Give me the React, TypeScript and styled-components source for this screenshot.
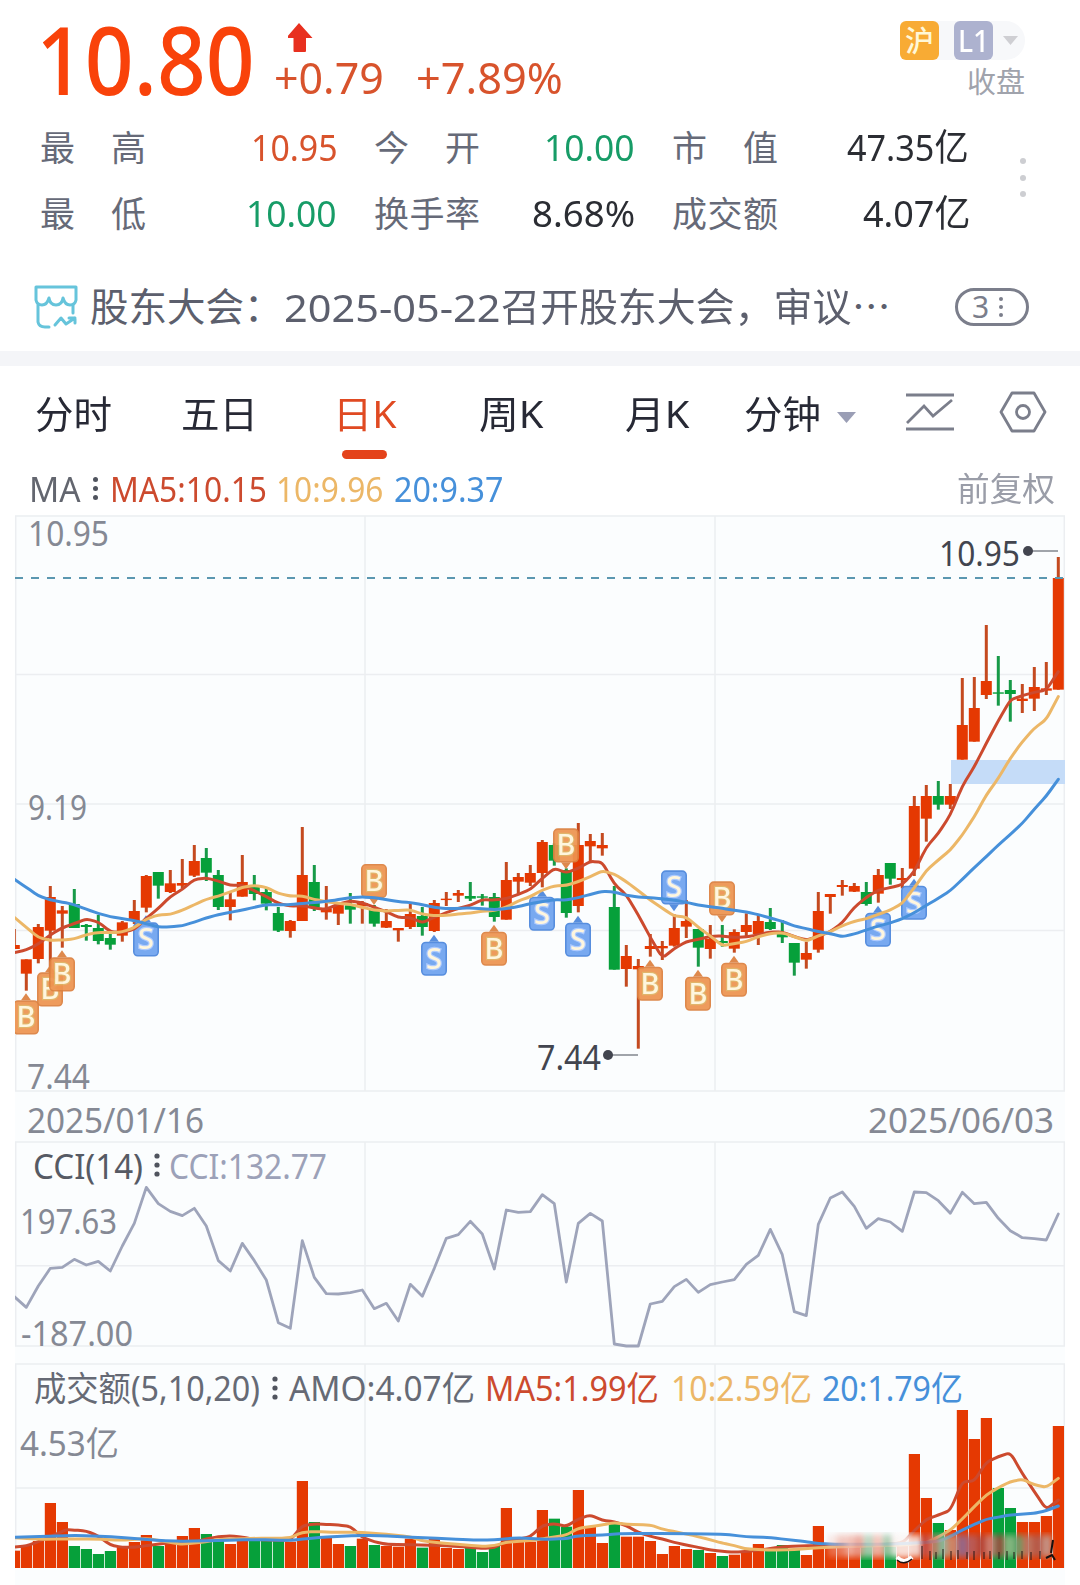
import React, { useLayoutEffect, useRef, useState } from "react";
import styled, { createGlobalStyle } from "styled-components";

const FONT = '"Noto Sans", "Noto Sans CJK SC", sans-serif';
const RED = "#e53902";
const GREEN = "#06a03a";
const LINE_RED = "#cc4a2e";
const LINE_GOLD = "#ecb767";
const LINE_BLUE = "#4690da";
const GRID = "#eceef1";

const Global = createGlobalStyle`
  * { box-sizing: border-box; }
  body { margin: 0; background: #fff; font-family: ${FONT}; }
`;

const Page = styled.main`
  width: 1080px;
  height: 1585px;
  display: flex;
  flex-direction: column;
  background: #fff;
`;

/* ---------- text fitted to a fixed measure ---------- */

const FitBox = styled.span<{ $w: number; $size: number; $color: string; $weight?: number }>`
  display: block;
  flex: none;
  width: ${(p) => p.$w}px;
  font-size: ${(p) => p.$size}px;
  font-weight: ${(p) => p.$weight ?? 400};
  line-height: 1;
  color: ${(p) => p.$color};
  white-space: nowrap;
`;
const FitInner = styled.span`
  display: inline-block;
  transform-origin: 0 50%;
`;

type FitProps = { w: number; size: number; color: string; weight?: number; children: React.ReactNode };

function Fit({ w, size, color, weight, children }: FitProps) {
  const ref = useRef<HTMLSpanElement>(null);
  const [scale, setScale] = useState(1);
  useLayoutEffect(() => {
    const el = ref.current;
    if (el && el.offsetWidth) setScale(w / el.offsetWidth);
  }, [w, size, children]);
  return (
    <FitBox $w={w} $size={size} $color={color} $weight={weight}>
      <FitInner ref={ref} style={{ transform: `scaleX(${scale})` }}>{children}</FitInner>
    </FitBox>
  );
}

/* ---------- quote header ---------- */

const Quote = styled.header`
  height: 114px;
  padding: 0 55px 0 36px;
  display: flex;
  align-items: flex-start;
`;
const PriceCell = styled.div`
  padding-top: 12px;
`;
const Change = styled.div`
  margin-left: 19px;
  padding-top: 22px;
  display: flex;
  flex-direction: column;
`;
const ArrowIcon = styled.svg`
  width: 28px;
  height: 31px;
  margin-left: 14px;
`;
const ChangeRow = styled.div`
  display: flex;
  gap: 32px;
  margin-top: 2px;
`;
const Market = styled.div`
  margin-left: auto;
  padding-top: 21px;
  display: flex;
  flex-direction: column;
  align-items: flex-end;
`;
const Badges = styled.div`
  display: flex;
  align-items: center;
  gap: 15px;
  width: 125px;
  height: 39px;
  border-radius: 8px 20px 20px 8px;
  background: #f7f8fa;
`;
const Badge = styled.span<{ $bg: string; $color: string; $weight?: number }>`
  display: flex;
  align-items: center;
  justify-content: center;
  width: 39px;
  height: 39px;
  border-radius: 6px;
  background: ${(p) => p.$bg};
  color: ${(p) => p.$color};
  font-size: 29px;
  font-weight: ${(p) => p.$weight ?? 400};
  line-height: 1;
`;
const Caret = styled.i<{ $w: number; $h: number; $color: string; $ml?: number; $mt?: number }>`
  flex: none;
  width: ${(p) => p.$w}px;
  height: ${(p) => p.$h}px;
  margin-left: ${(p) => p.$ml ?? 0}px;
  margin-top: ${(p) => p.$mt ?? 0}px;
  background: ${(p) => p.$color};
  clip-path: polygon(0 0, 100% 0, 50% 100%);
`;
const Closed = styled.div`
  margin-top: 7px;
`;

/* ---------- stat grid ---------- */

const Stats = styled.section`
  height: 144px;
  padding-left: 40px;
  display: flex;
`;
const StatGrid = styled.div`
  display: grid;
  grid-template-columns: 106px 190px 106px 154px 106px 190px;
  column-gap: 0;
  grid-template-rows: 66px 66px;
  align-items: center;
  width: 930px;
`;
const StatLabel = styled.div<{ $gap?: number }>`
  display: flex;
  justify-content: space-between;
  margin-left: ${(p) => p.$gap ?? 0}px;
  margin-right: -${(p) => p.$gap ?? 0}px;
  font-size: 35px;
  line-height: 1;
  color: #666a78;
`;
const StatValue = styled.div<{ $right: number }>`
  display: flex;
  justify-content: flex-end;
  margin-right: ${(p) => p.$right}px;
  margin-top: -2px;
`;
const Dots = styled.span<{ $size: number; $gap: number; $color: string; $ml?: number; $mt?: number }>`
  display: flex;
  flex: none;
  flex-direction: column;
  gap: ${(p) => p.$gap}px;
  margin-left: ${(p) => p.$ml ?? 0}px;
  margin-top: ${(p) => p.$mt ?? 0}px;
  i {
    width: ${(p) => p.$size}px;
    height: ${(p) => p.$size}px;
    border-radius: 50%;
    background: ${(p) => p.$color};
  }
`;

/* ---------- notice ---------- */

const Notice = styled.section`
  height: 93px;
  padding: 4px 51px 0 34px;
  display: flex;
  align-items: center;
`;
const NoticeIcon = styled.svg`
  width: 44px;
  height: 44px;
  margin-right: 12px;
`;
const CountPill = styled.div`
  margin-left: auto;
  width: 74px;
  height: 38px;
  border: 3px solid #7b7e8b;
  border-radius: 19px;
  display: flex;
  align-items: center;
  padding-left: 14px;
`;
const Divider = styled.div`
  height: 15px;
  background: #f4f5f8;
`;

/* ---------- tabs ---------- */

const Tabs = styled.nav`
  height: 104px;
  padding-left: 34px;
  display: flex;
  align-items: flex-start;
`;
const Tab = styled.div<{ $ml: number }>`
  margin-left: ${(p) => p.$ml}px;
  padding-top: 28px;
  height: 93px;
  display: flex;
  flex-direction: column;
  justify-content: space-between;
  align-items: center;
`;
const Underline = styled.i`
  width: 45px;
  height: 9px;
  margin-right: 2px;
  border-radius: 5px;
  background: #e4431b;
`;
const ToolIcon = styled.svg<{ $ml: number }>`
  flex: none;
  width: 50px;
  height: 44px;
  margin-left: ${(p) => p.$ml}px;
  margin-top: 24px;
`;

/* ---------- indicator legend ---------- */

const Legend = styled.div`
  height: 45px;
  padding: 2px 25px 0 29px;
  display: flex;
  align-items: flex-start;
`;
const Spacer = styled.i<{ $w?: number }>`
  ${(p) => (p.$w ? `width: ${p.$w}px;` : "flex: 1;")}
`;

const Charts = styled.section`
  margin-left: 15px;
  width: 1050px;
  flex: 1;
  display: flex;
  flex-direction: column;
  background: #fbfdfe;
`;
const Chart = styled.svg<{ $h: number }>`
  display: block;
  flex: none;
  width: 1050px;
  height: ${(p) => p.$h}px;
  overflow: visible;
  font-family: ${FONT};
`;

/* ---------- chart data ---------- */

type Candle = [up: 0 | 1, high: number, top: number, bottom: number, low: number];

const candles: Candle[] = [
  [1,387,435,447,447],[1,478,478,521,572],[1,372,381,477,490],[1,258,291,392,520],[1,318,331,341,443],
  [0,267,312,384,384],[0,372,375,381,422],[0,345,384,423,433],[0,402,414,434,449],[1,363,367,407,425],
  [1,300,333,363,372],[1,225,228,323,337],[0,216,216,257,296],[1,210,250,276,279],[1,177,249,257,264],
  [1,135,183,227,231],[0,144,174,218,243],[0,210,225,321,330],[1,275,298,321,361],[1,165,246,290,290],
  [0,225,258,282,301],[0,264,276,311,331],[0,321,339,392,396],[1,360,363,393,413],[1,81,225,363,363],
  [0,195,246,323,333],[1,258,325,337,359],[1,312,315,341,375],[0,279,316,329,371],[1,303,309,319,371],
  [0,315,330,371,380],[1,327,363,383,384],[1,384,384,391,425],[1,312,342,381,387],[0,321,348,381,407],
  [1,300,309,393,396],[1,276,296,299,318],[1,270,279,287,306],[0,246,288,296,303],[0,282,289,292,317],
  [0,279,291,351,365],[1,186,240,359,359],[1,219,231,245,285],[1,195,219,248,258],[1,120,126,219,262],
  [0,130,135,182,197],[0,205,210,339,353],[1,69,135,318,337],[1,102,123,139,185],[1,99,135,145,167],
  [0,258,321,509,509],[1,435,468,507,560],[1,477,498,508,746],[1,402,438,447,470],[1,423,438,445,480],
  [1,343,384,437,440],[1,300,363,380,414],[0,387,387,443,500],[1,375,417,447,476],[0,375,423,429,440],
  [1,388,396,446,458],[1,340,375,396,410],[1,342,363,402,435],[0,324,366,387,390],[0,360,400,412,429],
  [0,429,429,488,527],[1,425,459,479,506],[1,276,333,449,458],[1,282,282,291,341],[1,240,255,261,287],
  [1,249,258,275,276],[0,246,276,312,317],[1,207,225,281,308],[0,189,189,236,254],[1,204,234,240,265],
  [1,-12,18,206,228],[1,-45,-12,56,125],[0,-57,-12,14,29],[1,-48,-12,14,27],[1,-366,-225,-121,-121],
  [1,-369,-276,-175,-175],[1,-525,-357,-315,-303],[0,-432,-323,-319,-283],[0,-360,-330,-318,-235],
  [1,-348,-304,-297,-261],[1,-399,-339,-304,-267],[1,-414,-335,-328,-315],[1,-729,-666,-331,-331],
];

const ma5 = [458,450,432,405,383,371,357,366,395,398,388,355,325,290,268,238,234,243,256,256,272,290,310,318,317,324,328,312,303,308,322,335,352,353,368,352,338,325,316,299,300,296,283,268,235,205,218,205,184,187,252,285,345,412,474,446,425,418,409,408,412,411,404,396,396,410,420,409,395,368,322,292,270,263,254,215,142,100,45,-42,-100,-170,-238,-300,-313,-323,-330,-385];
const ma10 = [352,382,412,421,420,417,404,397,398,396,383,357,345,343,331,314,298,288,276,262,256,262,280,288,288,298,305,310,313,322,330,333,331,330,342,347,346,342,339,334,331,322,303,290,270,258,256,245,230,213,222,245,272,300,325,348,351,382,408,437,431,425,410,401,398,410,423,408,395,377,364,356,343,330,310,263,212,180,150,105,50,-15,-65,-125,-175,-215,-242,-310];
const ma20 = [238,262,287,300,306,314,328,340,350,356,362,371,381,381,377,366,354,344,337,330,322,314,314,314,310,308,304,299,293,291,293,299,305,308,314,322,326,325,324,326,329,326,320,311,305,299,300,293,283,274,276,286,291,293,297,300,307,315,320,325,331,336,344,354,364,378,386,395,401,410,402,390,378,369,356,338,316,295,272,238,203,170,135,103,70,28,-12,-62];

type Signal = { i: number; kind: "B" | "S"; top: number; below?: boolean };
const signals: Signal[] = [
  { i: 1, kind: "B", top: 601 }, { i: 3, kind: "B", top: 517 }, { i: 4, kind: "B", top: 472 },
  { i: 11, kind: "S", top: 367 }, { i: 30, kind: "B", top: 192, below: true }, { i: 35, kind: "S", top: 425 },
  { i: 40, kind: "B", top: 395 }, { i: 44, kind: "S", top: 290 }, { i: 46, kind: "B", top: 85, below: true },
  { i: 47, kind: "S", top: 368 }, { i: 53, kind: "B", top: 500 }, { i: 55, kind: "S", top: 211, below: true },
  { i: 57, kind: "B", top: 530 }, { i: 59, kind: "B", top: 244, below: true }, { i: 60, kind: "B", top: 488 },
  { i: 72, kind: "S", top: 338 }, { i: 75, kind: "S", top: 257 },
];

const cci = [620,652,588,535,532,508,525,514,543,468,400,292,341,364,377,355,408,512,543,460,512,570,698,715,452,562,611,612,608,600,656,640,693,583,619,535,445,434,394,432,537,360,367,365,314,341,576,400,370,393,762,768,768,642,634,590,568,607,584,576,569,523,496,418,494,665,677,403,324,306,349,415,386,396,424,306,308,332,370,307,341,337,385,422,443,446,450,372];

const volumes = [587,570,558,444,501,573,582,597,588,573,561,540,573,567,543,519,537,555,567,555,555,555,555,560,378,501,549,567,573,551,570,573,575,551,578,551,579,582,578,591,573,459,558,560,465,491,515,405,515,564,503,545,545,558,597,573,582,585,594,603,599,591,567,579,570,582,600,513,570,565,565,575,570,575,570,297,429,504,525,165,252,189,399,459,501,501,483,213];
const volumeDown = new Set([5,6,7,8,12,16,17,20,21,22,25,28,30,34,38,39,40,45,46,50,57,59,63,64,65,71,73,77,82,83]);

const vMa5: [number, number][] = [[0,576],[1,573],[2,560],[3,545],[4.3,524],[5,525],[6,528],[7,543],[8,570],[9,577],[10,577],[11,572],[13,563],[15,562],[16,552],[17,545],[18,543],[19,546],[20,553],[22,556],[23,555],[24,512],[25,507],[26,508],[27,510],[28,514],[29,547],[30,560],[31,568],[34,570],[36,572],[38,577],[39,580],[40,578],[41,558],[42,553],[43,545],[44,512],[45,506],[46,514],[47,492],[48,480],[49,496],[50,500],[51,512],[52,532],[53,544],[54,552],[55,562],[56,570],[57,577],[58,585],[60,592],[62,586],[64,575],[67,571],[71,572],[74,565],[75,527],[76,493],[77,480],[78,466],[79,380],[80,378],[81,322],[82,305],[83,293],[84,355],[85,410],[86,463],[87,435]];
const vMa10: [number, number][] = [[0,548],[2,553],[4,552],[7,552],[9,556],[11,550],[12,556],[13,562],[14,568],[16,560],[17,553],[20,550],[22,550],[23,548],[24,532],[25,530],[27,532],[29,532],[31,538],[33,545],[34,558],[36,565],[39,574],[40,572],[41,562],[43,556],[44,552],[46,540],[47,520],[49,510],[50,503],[51,508],[53,510],[54,522],[57,545],[59,564],[60,572],[61,582],[63,585],[65,584],[67,578],[70,574],[74,570],[76,565],[78,526],[79,492],[80,455],[81,420],[82,398],[83,380],[84,373],[85,389],[86,397],[87,370]];
const vMa20: [number, number][] = [[0,547],[5,541],[8,545],[12,556],[14,559],[17,556],[20,554],[23,556],[24,552],[26,546],[29,541],[31,543],[34,548],[38,555],[40,555],[42,548],[44,553],[46,551],[47,542],[49,540],[51,535],[55,536],[59,537],[61,545],[63,548],[66,560],[67,566],[69,568],[73,568],[77,560],[78,545],[79,525],[80,508],[81,493],[82,486],[83,480],[85,475],[86,467],[87,453]];

const xAt = (i: number) => 14.3 + i * 12;
const priceY = (v: number) => 800 + v / 3;
const cciY = (v: number) => 1090 + v / 3;
const volY = (v: number) => 1355 + v / 3;

/* rounds each joint a little so the averages read as smooth curves */
function smooth(points: [number, number][]) {
  let d = `M${points[0][0]} ${points[0][1]}`;
  for (let i = 1; i < points.length - 1; i++) {
    const [x, y] = points[i];
    const [px, py] = points[i - 1];
    const [nx, ny] = points[i + 1];
    d += ` L${x + (px - x) * 0.3} ${y + (py - y) * 0.3} Q${x} ${y} ${x + (nx - x) * 0.3} ${y + (ny - y) * 0.3}`;
  }
  const last = points[points.length - 1];
  return `${d} L${last[0]} ${last[1]}`;
}

const Curve = ({ points, color, width = 3 }: { points: [number, number][]; color: string; width?: number }) => (
  <path d={smooth(points)} fill="none" stroke={color} strokeWidth={width} strokeLinecap="round" strokeLinejoin="round" />
);

type LabelProps = { x: number; y: number; w: number; color: string; size?: number; children: string };
const Label = ({ x, y, w, color, size = 34, children }: LabelProps) => (
  <text x={x} y={y} fontSize={size} fill={color} textLength={w} lengthAdjust="spacingAndGlyphs">{children}</text>
);

const VDots = ({ x, y, color = "#50545e" }: { x: number; y: number; color?: string }) => (
  <g fill={color}>
    {[-9, 0, 9].map((d) => <circle key={d} cx={x} cy={y + d} r={2.6} />)}
  </g>
);

function SignalMark({ i, kind, top, below }: Signal) {
  const x = xAt(i) - 0.3;
  const y = priceY(top);
  const isBuy = kind === "B";
  const fill = isBuy ? "#ee9450" : "#6fa3f0";
  const edge = isBuy ? "#dc8140" : "#4b86dc";
  const tip = below ? `M${x - 5} ${y + 34}L${x} ${y + 41}L${x + 5} ${y + 34}Z` : `M${x - 5} ${y}L${x} ${y - 7}L${x + 5} ${y}Z`;
  return (
    <g opacity={0.93}>
      <path d={tip} fill={edge} />
      <rect x={x - 12.2} y={y + 0.8} width={24.4} height={32.6} rx={4} fill={fill} stroke={edge} strokeWidth={1.6} />
      <text x={x} y={y + 27} fontSize={29} fontWeight={500} textAnchor="middle" fill="#fff6dc"
        stroke={isBuy ? "#e0b060" : "#a9c8ff"} strokeWidth={2.4} paintOrder="stroke">{kind}</text>
    </g>
  );
}

function PriceChart() {
  return (
    <Chart $h={627} viewBox="15 515 1050 627">
      <defs>
        <clipPath id="pricePlot"><rect x={15} y={515} width={1050} height={627} /></clipPath>
      </defs>
      <g stroke={GRID} strokeWidth={1.5} fill="none">
        <path d="M15 516H1064.3V1091H15.7V516M365 516V1091M715 516V1091M15 674.5H1065M15 804H1065M15 930.5H1065" />
      </g>
      <rect x={951} y={760} width={114} height={24} fill="#c5dcf8" />
      <Label x={28} y={546} w={81} color="#858994">10.95</Label>
      <Label x={28} y={820} w={59} color="#858994">9.19</Label>
      <Label x={27} y={1089} w={63} color="#858994">7.44</Label>
      <g clipPath="url(#pricePlot)">
        {candles.map(([up, high, top, bottom, low], i) => (
          <g key={i} fill={up ? RED : GREEN}>
            <rect x={xAt(i) - 1.5} y={priceY(high)} width={3} height={(low - high) / 3} fill={up ? "#c44a20" : "#179a48"} />
            <rect x={xAt(i) - 5.5} y={priceY(top)} width={11} height={Math.max(1.4, (bottom - top) / 3)} />
          </g>
        ))}
        <path d="M15 578H1065" stroke="#5b97b0" strokeWidth={2} strokeDasharray="8 8" />
        {signals.map((s) => <SignalMark key={s.i} {...s} />)}
        <Curve points={ma5.map((v, i) => [xAt(i), priceY(v)])} color={LINE_RED} />
        <Curve points={ma10.map((v, i) => [xAt(i), priceY(v)])} color={LINE_GOLD} />
        <Curve points={ma20.map((v, i) => [xAt(i), priceY(v)])} color={LINE_BLUE} />
      </g>
      <g stroke="#83868f" strokeWidth={1.6}>
        <path d="M1028 551H1058M608 1055H638" />
        <circle cx={1028} cy={551} r={5} fill="#42454f" stroke="none" />
        <circle cx={608} cy={1055} r={5} fill="#42454f" stroke="none" />
      </g>
      <Label x={939} y={566} w={81} color="#42454f">10.95</Label>
      <Label x={537} y={1070} w={64} color="#42454f">7.44</Label>
      <Label x={27} y={1133} w={177} color="#858994">2025/01/16</Label>
      <Label x={868} y={1133} w={186} color="#858994">2025/06/03</Label>
    </Chart>
  );
}

function CciChart() {
  return (
    <Chart $h={222} viewBox="15 1142 1050 222">
      <defs>
        <clipPath id="cciPlot"><rect x={15} y={1142} width={1050} height={222} /></clipPath>
      </defs>
      <path d="M15 1142H1064.3V1346H15.7V1142M365 1142V1346M715 1142V1346M15 1265.7H1065" stroke={GRID} strokeWidth={1.5} fill="none" />
      <Label x={33} y={1179} w={110} color="#565a64">CCI(14)</Label>
      <VDots x={157} y={1165} />
      <Label x={169} y={1179} w={158} color="#9ca1b8">CCI:132.77</Label>
      <Label x={20} y={1234} w={97} color="#858994">197.63</Label>
      <Label x={21} y={1345.5} w={112} color="#858994">-187.00</Label>
      <polyline points={cci.map((v, i) => `${xAt(i)},${cciY(v)}`).join(" ")} clipPath="url(#cciPlot)" fill="none" stroke="#9ea4ba" strokeWidth={2.8} strokeLinejoin="round" strokeLinecap="round" />
    </Chart>
  );
}

const smearTones = ["#f3c5bb", "#eca99b", "#f0b8ac", "#e9a294", "#b5cfb9", "#f1bfb4", "#a9c9ad", "#f7efec", "#e2978c", "#f6ebe8", "#c2504a", "#cf7a6c", "#9fb59f", "#c98f74", "#8e6c94", "#b45f60", "#b04a40", "#c88278", "#a24d42", "#93b887", "#6ba06f", "#b77a6a", "#b05f52", "#c09a90"];

function Smear() {
  return (
    <g>
      <defs>
        <filter id="soft" x="-5%" y="-30%" width="110%" height="160%"><feGaussianBlur stdDeviation="2 3.4" /></filter>
        <linearGradient id="fadeIn" x1="0" x2="1"><stop offset="0" stopColor="#fff" stopOpacity="0.1" /><stop offset="0.12" stopColor="#fff" /></linearGradient>
        <mask id="smearMask"><rect x={822} y={1520} width={240} height={50} fill="url(#fadeIn)" /></mask>
      </defs>
      <g mask="url(#smearMask)">
        <g filter="url(#soft)" opacity={0.88}>
          {smearTones.map((c, i) => <rect key={i} x={826 + i * 9.4} y={1535} width={9.4} height={22} fill={c} />)}
          <rect x={897} y={1534} width={14} height={24} fill="#fbf6f4" />
        </g>
      </g>
      <path d="M897 1557Q904 1565 912 1557" stroke="#fff" strokeWidth={4} fill="none" />
      <path d="M897 1560Q904 1566 912 1559" stroke="#1c1110" strokeWidth={1.4} fill="none" />
      <path d="M922 1546V1559M930 1551V1560M936 1552V1559M943 1549V1559M951 1551V1560M958 1550V1559M967 1552V1559M974 1551V1560M984 1552V1559M990 1551V1559M999 1552V1559M1007 1551V1560M1014 1552V1559M1022 1551V1559M1031 1552V1560M1040 1551V1559" stroke="#221413" strokeWidth={1.5} opacity={0.65} />
      <path d="M1053 1540L1051 1553M1046 1558L1052 1555L1055 1560" stroke="#17100f" strokeWidth={2} fill="none" />
    </g>
  );
}

function VolumeChart() {
  const toPoints = (list: [number, number][]) => list.map(([i, v]) => [xAt(i), volY(v)] as [number, number]);
  return (
    <Chart $h={221} viewBox="15 1364 1050 221">
      <defs>
        <clipPath id="volPlot"><rect x={15} y={1364} width={1050} height={221} /></clipPath>
      </defs>
      <path d="M15 1364H1064.3V1568M15.7 1568V1364M365 1364V1568M715 1364V1568M15 1488H1065" stroke={GRID} strokeWidth={1.5} fill="none" />
      <g clipPath="url(#volPlot)">
        {volumes.map((v, i) => (
          <rect key={i} x={xAt(i) - 5.5} y={volY(v)} width={11.2} height={1568 - volY(v)} fill={volumeDown.has(i) ? GREEN : RED} />
        ))}
        <Curve points={toPoints(vMa5)} color={LINE_RED} />
        <Curve points={toPoints(vMa10)} color={LINE_GOLD} />
        <Curve points={toPoints(vMa20)} color={LINE_BLUE} />
        <Smear />
      </g>
      <Label x={34} y={1401} w={226} color="#666a75">成交额(5,10,20)</Label>
      <VDots x={275} y={1388} />
      <Label x={289} y={1401} w={186} color="#666a75">AMO:4.07亿</Label>
      <Label x={485} y={1401} w={174} color={LINE_RED}>MA5:1.99亿</Label>
      <Label x={671} y={1401} w={141} color={LINE_GOLD}>10:2.59亿</Label>
      <Label x={822} y={1401} w={141} color={LINE_BLUE}>20:1.79亿</Label>
      <Label x={20} y={1456} w={99} color="#858994">4.53亿</Label>
    </Chart>
  );
}

const Chars = ({ text, gap }: { text: string; gap?: number }) => (
  <StatLabel $gap={gap}>{[...text].map((c) => <span key={c}>{c}</span>)}</StatLabel>
);

const INK = "#2b2d33";
const UP = "#d8532c";
const DOWN = "#179c67";

export default function App() {
  return (
    <Page>
      <Global />
      <Quote>
        <PriceCell><Fit w={219} size={94} color="#f9420a" weight={500}>10.80</Fit></PriceCell>
        <Change>
          <ArrowIcon viewBox="0 0 28 31">
            <path d="M11 1L24.500 16H18V29Q18 30 17 30H6.500Q5.500 30 5.500 29V16H-2Z" fill="#e8301f" />
          </ArrowIcon>
          <ChangeRow>
            <Fit w={110} size={44.5} color={UP}>+0.79</Fit>
            <Fit w={147} size={44.5} color={UP}>+7.89%</Fit>
          </ChangeRow>
        </Change>
        <Market>
          <Badges>
            <Badge $bg="#f8ab34" $color="#fff8d8" $weight={500}>沪</Badge>
            <Badge $bg="#adb2cf" $color="#fff"><Fit w={31} size={31} color="#fff" weight={500}>L1</Fit></Badge>
            <Caret $w={15} $h={9} $color="#cfcfd3" $ml={-5} />
          </Badges>
          <Closed><Fit w={58} size={29} color="#a0a3ac">收盘</Fit></Closed>
        </Market>
      </Quote>

      <Stats>
        <StatGrid>
          <Chars text="最高" />
          <StatValue $right={-2}><Fit w={87} size={37} color={UP}>10.95</Fit></StatValue>
          <Chars text="今开" gap={38} />
          <StatValue $right={-39}><Fit w={91} size={37} color={DOWN}>10.00</Fit></StatValue>
          <Chars text="市值" gap={76} />
          <StatValue $right={-77}><Fit w={122} size={37} color={INK}>47.35亿</Fit></StatValue>
          <Chars text="最低" />
          <StatValue $right={-1}><Fit w={91} size={37} color={DOWN}>10.00</Fit></StatValue>
          <Chars text="换手率" gap={38} />
          <StatValue $right={-39}><Fit w={103} size={37} color={INK}>8.68%</Fit></StatValue>
          <Chars text="成交额" gap={76} />
          <StatValue $right={-78}><Fit w={107} size={37} color={INK}>4.07亿</Fit></StatValue>
        </StatGrid>
        <Dots $size={6} $gap={10.5} $color="#cdced2" $ml={50} $mt={44}><i /><i /><i /></Dots>
      </Stats>

      <Notice>
        <NoticeIcon viewBox="0 0 44 44" fill="none" stroke="#66c4db" strokeWidth="3" strokeLinecap="round" strokeLinejoin="round">
          <path d="M2 2H42V15Q41 20 36 20Q31 20 29 13Q28 20 22 20Q16 20 15 13Q13 20 8 20Q3 20 2 15Z" />
          <path d="M4 20V37Q5 42 11 42H15M39 20V28M21 40L27 33L32 39L41 33M35 33H41V38" />
        </NoticeIcon>
        <Fit w={193} size={38.5} color="#5c5f6d">股东大会：</Fit>
        <Spacer $w={1} />
        <Fit w={217} size={39} color="#5c5f6d">2025-05-22</Fit>
        <Fit w={351} size={38.5} color="#5c5f6d">召开股东大会，审议</Fit>
        <Fit w={39} size={38.5} color="#5c5f6d">⋯</Fit>
        <CountPill>
          <Fit w={17} size={30} color="#7b7e8b">3</Fit>
          <Dots $size={4} $gap={4} $color="#7b7e8b" $ml={10}><i /><i /><i /></Dots>
        </CountPill>
      </Notice>
      <Divider />

      <Tabs>
        <Tab $ml={1}><Fit w={77} size={38} color="#272935">分时</Fit></Tab>
        <Tab $ml={69}><Fit w={77} size={38} color="#272935">五日</Fit></Tab>
        <Tab $ml={75}><Fit w={64} size={38} color="#e04a22">日K</Fit><Underline /></Tab>
        <Tab $ml={82}><Fit w={65} size={38} color="#272935">周K</Fit></Tab>
        <Tab $ml={81}><Fit w={65} size={38} color="#272935">月K</Fit></Tab>
        <Tab $ml={54}><Fit w={77} size={38} color="#272935">分钟</Fit></Tab>
        <Caret $w={19} $h={11} $color="#9a9eb5" $ml={16} $mt={46} />
        <ToolIcon $ml={49} viewBox="0 0 50 44" fill="none" stroke="#7b7e8b" strokeWidth="2.8">
          <path d="M1 5H49M1 39H49M2 33L19 16L28 26L47 10" />
        </ToolIcon>
        <ToolIcon $ml={43} viewBox="0 0 50 44" fill="none" stroke="#7b7e8b" strokeWidth="2.8" strokeLinejoin="round">
          <path d="M14 3H36L47 22L36 41H14L3 22Z" /><circle cx="25" cy="22" r="6.5" />
        </ToolIcon>
      </Tabs>

      <Legend>
        <Fit w={52} size={34} color="#63666f">MA</Fit>
        <Dots $size={5} $gap={4} $color="#50545e" $ml={12} $mt={5}><i /><i /><i /></Dots>
        <Spacer $w={12} />
        <Fit w={157} size={34} color={LINE_RED}>MA5:10.15</Fit>
        <Spacer $w={9} />
        <Fit w={107} size={34} color={LINE_GOLD}>10:9.96</Fit>
        <Spacer $w={11} />
        <Fit w={109} size={34} color={LINE_BLUE}>20:9.37</Fit>
        <Spacer />
        <Fit w={98} size={33} color="#9a9da8">前复权</Fit>
      </Legend>

      <Charts>
        <PriceChart />
        <CciChart />
        <VolumeChart />
      </Charts>
    </Page>
  );
}
